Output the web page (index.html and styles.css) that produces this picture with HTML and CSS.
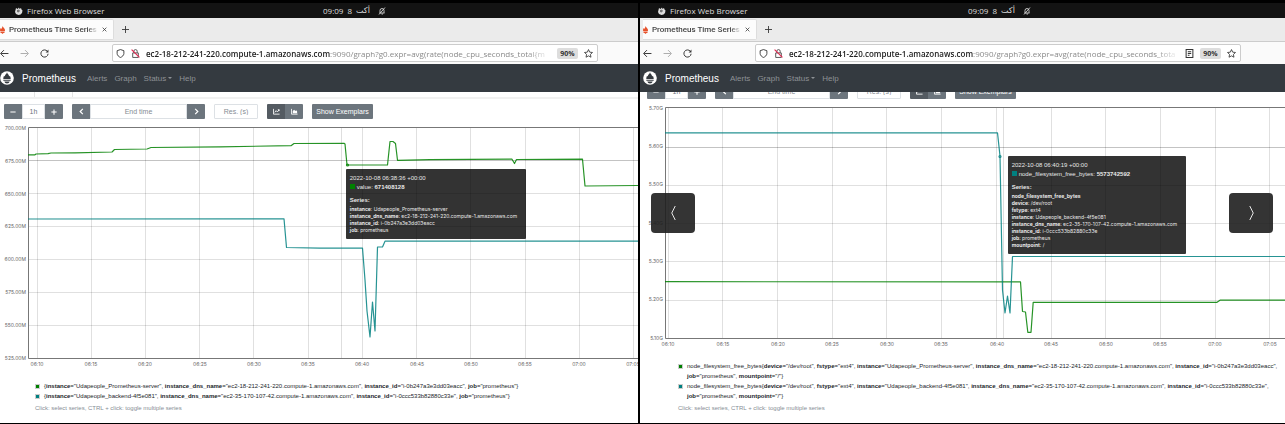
FILE: index.html
```html
<!DOCTYPE html>
<html lang="en">
<head>
<meta charset="utf-8">
<title>Prometheus Time Series</title>
<link rel="stylesheet" href="styles.css">
</head>
<body>
<svg class="sprite" aria-hidden="true">
  <symbol id="firefox" viewBox="0 0 16 16"><path fill="#ddd" d="M2 2l3 2 3-3 1 3 3-2 1 3 2 2-1 5-3 3-4 1-5-2-2-4z"/><path fill="#777" d="M4 6l4-1 2 3-3 3-3-1z"/></symbol>
  <symbol id="bell" viewBox="0 0 16 16"><path fill="none" stroke="currentColor" stroke-width="1.7" d="M4 11V7a4 4 0 0 1 8 0v4l1 1H3zM7 14h3M2 15L14 1"/></symbol>
  <symbol id="flame" viewBox="0 0 10 16"><path fill="#e6522c" d="M5 0c1 3 5 5 5 8 0 1 0 2-1 3H1C0 10 0 9 0 8c0-2 1-2 1-4l2 2c0-2 2-3 2-6zM1 12h8v2H7l-2 2-2-2H1z"/></symbol>
  <symbol id="x" viewBox="0 0 16 16"><path fill="none" stroke="currentColor" stroke-width="2.4" d="M2 2l12 12M14 2L2 14"/></symbol>
  <symbol id="plus" viewBox="0 0 16 16"><path fill="none" stroke="currentColor" stroke-width="2" d="M8 0v16M0 8h16"/></symbol>
  <symbol id="arrow" viewBox="0 0 16 16"><path fill="none" stroke="currentColor" stroke-width="1.700" d="M15 8H2M7 2L1 8l6 6"/></symbol>
  <symbol id="reload" viewBox="0 0 16 16"><path fill="none" stroke="currentColor" stroke-width="1.700" d="M13 4a6.4 6.4 0 1 0 1.4 4.5"/><path fill="currentColor" d="M15 1v5h-5z"/></symbol>
  <symbol id="shield" viewBox="0 0 16 16"><path fill="none" stroke="currentColor" stroke-width="1.6" stroke-linejoin="round" d="M8 1l6 2v5c0 3-3 6-6 7-3-1-6-4-6-7V3z"/></symbol>
  <symbol id="lock" viewBox="0 0 16 16"><path fill="none" stroke="#555" stroke-width="1.7" d="M3 7h10v8H3zM5 7V4a3 3 0 0 1 6 0v3"/><path stroke="#e22850" stroke-width="2" d="M1 1l14 14"/></symbol>
  <symbol id="reader" viewBox="0 0 16 16"><path fill="none" stroke="currentColor" stroke-width="1.8" d="M2 1h12v14H2zM5 5h6M5 8h6M5 11h3"/></symbol>
  <symbol id="star" viewBox="0 0 16 16"><path fill="none" stroke="currentColor" stroke-width="1.5" stroke-linejoin="round" d="M8 1l2.1 4.6 5 .6-3.700 3.400 1 5L8 12.200l-4.400 2.400 1-5L.9 6.200l5-.6z"/></symbol>
  <symbol id="logo" viewBox="0 0 16 16"><circle cx="8" cy="8" r="7.800" fill="#fff"/><path fill="#343a40" d="M8 1.500c.4 2 2.400 2.700 2.400 4.700l.9-.8c.5 1.500 1 2 .9 3.600H3.800c-.1-1.600.4-2.100.8-3.500l.9.800C5.500 4.300 7.700 3.500 8 1.500zM3.800 9.900h8.400v1.200H3.800zM5 12h6c-.3 1.500-1.500 2.200-3 2.200S5.300 13.500 5 12z"/></symbol>
  <symbol id="minus-b" viewBox="0 0 16 16"><path stroke="currentColor" stroke-width="2.800" d="M1 8h14"/></symbol>
  <symbol id="plus-b" viewBox="0 0 16 16"><path stroke="currentColor" stroke-width="2.800" d="M1 8h14M8 1v14"/></symbol>
  <symbol id="left" viewBox="0 0 16 16"><path fill="none" stroke="currentColor" stroke-width="2.800" d="M11 2L5 8l6 6"/></symbol>
  <symbol id="right" viewBox="0 0 16 16"><path fill="none" stroke="currentColor" stroke-width="2.800" d="M5 2l6 6-6 6"/></symbol>
  <symbol id="line" viewBox="0 0 16 16"><path fill="none" stroke="currentColor" stroke-width="2" d="M1 2v12h14M4 10l3-4 3 3 4-5M11 4h3v3"/></symbol>
  <symbol id="area" viewBox="0 0 16 16"><path fill="none" stroke="currentColor" stroke-width="2" d="M1 2v12h14"/><path fill="currentColor" d="M4 12V7l3-3 3 3 2-2 2 3v4z"/></symbol>
</svg>

<main class="desk">
  <section class="pane">
    <header class="sysbar">
      <div class="app"><svg class="i8"><use href="#firefox"/></svg>Firefox Web Browser</div>
      <div class="clock"><span>09:09</span><span>8</span><bdi class="ar">أكت</bdi><svg class="i8 bell"><use href="#bell"/></svg></div>
    </header>
    <div class="tabs">
      <div class="tab"><svg class="flame"><use href="#flame"/></svg><span class="title">Prometheus Time Series C</span><button class="plain" aria-label="Close tab"><svg class="i5"><use href="#x"/></svg></button></div>
      <button class="plain" aria-label="New tab"><svg class="i7"><use href="#plus"/></svg></button>
    </div>
    <div class="address">
      <button class="plain" aria-label="Back"><svg class="i9"><use href="#arrow"/></svg></button>
      <button class="plain fwd" aria-label="Forward"><svg class="i9"><use href="#arrow"/></svg></button>
      <button class="plain" aria-label="Reload"><svg class="i9"><use href="#reload"/></svg></button>
      <div class="url">
        <svg class="i9"><use href="#shield"/></svg><svg class="i9"><use href="#lock"/></svg>
        <div class="text" role="textbox" aria-label="Address" contenteditable="true" spellcheck="false"><b>ec2-18-212-241-220.compute-1.amazonaws.com</b>:9090/graph?g0.expr=avg(rate(node_cpu_seconds_total{m</div>
        <button class="zoom">90%</button>
        <button class="plain" aria-label="Bookmark"><svg class="i9"><use href="#star"/></svg></button>
      </div>
    </div>
    <nav class="nav">
      <svg class="logo"><use href="#logo"/></svg>
      <a class="brand" href="#">Prometheus</a><a href="#">Alerts</a><a href="#">Graph</a><a class="caret" href="#">Status</a><a href="#">Help</a>
    </nav>
    <div class="content">
      <div class="strip"><span></span><span></span></div>
      <form class="controls">
        <div class="group"><button type="button" aria-label="Shorter"><svg class="i6"><use href="#minus-b"/></svg></button><input class="range" aria-label="Range" value="1h"><button type="button" aria-label="Longer"><svg class="i6"><use href="#plus-b"/></svg></button></div>
        <div class="group"><button type="button" aria-label="Earlier"><svg class="i7"><use href="#left"/></svg></button><input class="end" aria-label="End time" placeholder="End time"><button type="button" aria-label="Later"><svg class="i7"><use href="#right"/></svg></button></div>
        <input class="res" aria-label="Resolution" placeholder="Res. (s)">
        <div class="group"><button type="button" class="on" aria-label="Line graph"><svg class="i7"><use href="#line"/></svg></button><button type="button" aria-label="Stacked graph"><svg class="i7"><use href="#area"/></svg></button></div>
        <button type="button" class="wide">Show Exemplars</button>
      </form>
      <div class="chart">
        <svg class="plot" viewBox="0 119 638 252">
          <path class="grid" d="M28 160.500H638M28 193.500H638M28 226.500H638M28 259.500H638M28 292.500H638M28 325.500H638M37.500 127V358M91.500 127V358M145.500 127V358M199.500 127V358M253.500 127V358M308.500 127V358M362.500 127V358M416.500 127V358M470.500 127V358M525.500 127V358M579.500 127V358M633.500 127V358"/>
          <path class="cross" d="M341.500 127V358M28 160.500H638"/>
          <path class="frame" d="M640 127.500H28.500V358.500H640"/>
          <path class="green" d="M28 154.800H35L36 154L48 153.700L51 153L75 152.800L112 152L114.500 149.500L147 149L151 147.500L220 146.800L291 145.700L294 143.500L344 143.300L345 144L347 165H387.500L390 141.500H393L395.500 143.500L397.500 160.300L430 159.600L512 159.200L514.500 163.500L516.500 159.500L582.500 159.200L585 186L638 185.500"/>
          <path class="teal" d="M28 219L284 218.800L286.500 247.500L320 248.200H362.500L365 280L367 311L370 337L372.500 302L375 331L377.500 247H382.500L385 241.200H638"/>
          <circle class="green" cx="347.500" cy="165" r="1"/>
          <g class="ylab"><text x="26" y="130">700.00M</text><text x="26" y="163">675.00M</text><text x="26" y="196">650.00M</text><text x="26" y="228">625.00M</text><text x="26" y="261">600.00M</text><text x="26" y="294">575.00M</text><text x="26" y="327">550.00M</text><text x="26" y="360">525.00M</text></g>
          <g class="xlab"><text x="37" y="366">06:10</text><text x="91" y="366">06:15</text><text x="145" y="366">06:20</text><text x="200" y="366">06:25</text><text x="254" y="366">06:30</text><text x="308" y="366">06:35</text><text x="362" y="366">06:40</text><text x="417" y="366">06:45</text><text x="471" y="366">06:50</text><text x="525" y="366">06:55</text><text x="579" y="366">07:00</text><text x="633" y="366">07:05</text></g>
        </svg>
        <div class="tip tip-a">
          <div>2022-10-08 06:38:36 +00:00</div>
          <div><i class="dot g"></i>value: <b>671408128</b></div>
          <h4>Series:</h4>
          <ul><li><b>instance</b>: Udapeople_Prometheus-server</li><li><b>instance_dns_name</b>: ec2-18-212-241-220.compute-1.amazonaws.com</li><li><b>instance_id</b>: i-0b247a3e3dd03eacc</li><li><b>job</b>: prometheus</li></ul>
        </div>
      </div>
      <div class="legend">
        <div class="row"><i class="key g"></i><span>{<b>instance</b>="Udapeople_Prometheus-server", <b>instance_dns_name</b>="ec2-18-212-241-220.compute-1.amazonaws.com", <b>instance_id</b>="i-0b247a3e3dd03eacc", <b>job</b>="prometheus"}</span></div>
        <div class="row"><i class="key t"></i><span>{<b>instance</b>="Udapeople_backend-4f5e081", <b>instance_dns_name</b>="ec2-35-170-107-42.compute-1.amazonaws.com", <b>instance_id</b>="i-0ccc533b82880c33e", <b>job</b>="prometheus"}</span></div>
        <p>Click: select series, CTRL + click: toggle multiple series</p>
      </div>
    </div>
  </section>

  <section class="pane second">
    <header class="sysbar">
      <div class="app"><svg class="i8"><use href="#firefox"/></svg>Firefox Web Browser</div>
      <div class="clock"><span>09:09</span><span>8</span><bdi class="ar">أكت</bdi><svg class="i8 bell"><use href="#bell"/></svg></div>
    </header>
    <div class="tabs">
      <div class="tab"><svg class="flame"><use href="#flame"/></svg><span class="title">Prometheus Time Series C</span><button class="plain" aria-label="Close tab"><svg class="i5"><use href="#x"/></svg></button></div>
      <button class="plain" aria-label="New tab"><svg class="i7"><use href="#plus"/></svg></button>
    </div>
    <div class="address">
      <button class="plain" aria-label="Back"><svg class="i9"><use href="#arrow"/></svg></button>
      <button class="plain fwd" aria-label="Forward"><svg class="i9"><use href="#arrow"/></svg></button>
      <button class="plain" aria-label="Reload"><svg class="i9"><use href="#reload"/></svg></button>
      <div class="url">
        <svg class="i9"><use href="#shield"/></svg><svg class="i9"><use href="#lock"/></svg>
        <div class="text" role="textbox" aria-label="Address" contenteditable="true" spellcheck="false"><b>ec2-18-212-241-220.compute-1.amazonaws.com</b>:9090/graph?g0.expr=avg(rate(node_cpu_seconds_tota</div>
        <button class="plain" aria-label="Reader view"><svg class="i9"><use href="#reader"/></svg></button>
        <button class="zoom">90%</button>
        <button class="plain" aria-label="Bookmark"><svg class="i9"><use href="#star"/></svg></button>
      </div>
    </div>
    <nav class="nav">
      <svg class="logo"><use href="#logo"/></svg>
      <a class="brand" href="#">Prometheus</a><a href="#">Alerts</a><a href="#">Graph</a><a class="caret" href="#">Status</a><a href="#">Help</a>
    </nav>
    <div class="content">
      <form class="controls">
        <div class="group"><button type="button" aria-label="Shorter"><svg class="i6"><use href="#minus-b"/></svg></button><input class="range" aria-label="Range" value="1h"><button type="button" aria-label="Longer"><svg class="i6"><use href="#plus-b"/></svg></button></div>
        <div class="group"><button type="button" aria-label="Earlier"><svg class="i7"><use href="#left"/></svg></button><input class="end" aria-label="End time" placeholder="End time"><button type="button" aria-label="Later"><svg class="i7"><use href="#right"/></svg></button></div>
        <input class="res" aria-label="Resolution" placeholder="Res. (s)">
        <div class="group"><button type="button" class="on" aria-label="Line graph"><svg class="i7"><use href="#line"/></svg></button><button type="button" aria-label="Stacked graph"><svg class="i7"><use href="#area"/></svg></button></div>
        <button type="button" class="wide">Show Exemplars</button>
      </form>
      <div class="chart">
        <svg class="plot" viewBox="640 99 645 252">
          <path class="grid" d="M665 147.500H1285M665 185.500H1285M665 223.500H1285M665 261.500H1285M665 300.500H1285M668.500 107V338M722.500 107V338M777.500 107V338M832.500 107V338M886.500 107V338M941.500 107V338M996.500 107V338M1051.500 107V338M1105.500 107V338M1160.500 107V338M1215.500 107V338M1269.500 107V338"/>
          <path class="cross" d="M1003.500 107V338M665 147.500H1285"/>
          <path class="frame" d="M1287 107.500H665.500V338.500H1287"/>
          <path class="green" d="M665 281.700L1020.500 281.800L1022.500 311.500L1025.500 312L1027.800 332.300H1031L1033.200 302.300H1217L1220 300.200H1285"/>
          <path class="teal" d="M665 132.800H997.500L1000 156L1002.500 290L1005 313L1007.500 296L1010 313L1012.500 256.500H1285"/>
          <circle class="teal" cx="1000" cy="156.500" r="1"/>
          <g class="ylab"><text x="663" y="110">5.70G</text><text x="663" y="148">5.60G</text><text x="663" y="186">5.50G</text><text x="663" y="225">5.40G</text><text x="663" y="263">5.30G</text><text x="663" y="301">5.20G</text><text x="663" y="340">5.10G</text></g>
          <g class="xlab"><text x="668" y="346">06:10</text><text x="723" y="346">06:15</text><text x="778" y="346">06:20</text><text x="832" y="346">06:25</text><text x="887" y="346">06:30</text><text x="941" y="346">06:35</text><text x="997" y="346">06:40</text><text x="1051" y="346">06:45</text><text x="1106" y="346">06:50</text><text x="1160" y="346">06:55</text><text x="1215" y="346">07:00</text><text x="1270" y="346">07:05</text></g>
        </svg>
        <div class="tip tip-b">
          <div>2022-10-08 06:40:19 +00:00</div>
          <div><i class="dot t"></i>node_filesystem_free_bytes: <b>5573742592</b></div>
          <h4>Series:</h4>
          <ul><li><b>node_filesystem_free_bytes</b></li><li><b>device</b>: /dev/root</li><li><b>fstype</b>: ext4</li><li><b>instance</b>: Udapeople_backend-4f5e081</li><li><b>instance_dns_name</b>: ec2-35-170-107-42.compute-1.amazonaws.com</li><li><b>instance_id</b>: i-0ccc533b82880c33e</li><li><b>job</b>: prometheus</li><li><b>mountpoint</b>: /</li></ul>
        </div>
      </div>
      <div class="legend">
        <div class="row"><i class="key g"></i><span>node_filesystem_free_bytes{<b>device</b>="/dev/root", <b>fstype</b>="ext4", <b>instance</b>="Udapeople_Prometheus-server", <b>instance_dns_name</b>="ec2-18-212-241-220.compute-1.amazonaws.com", <span class="keep"><b>instance_id</b>="i-0b247a3e3dd03eacc"</span>, <b>job</b>="prometheus", <b>mountpoint</b>="/"}</span></div>
        <div class="row"><i class="key t"></i><span>node_filesystem_free_bytes{<b>device</b>="/dev/root", <b>fstype</b>="ext4", <b>instance</b>="Udapeople_backend-4f5e081", <b>instance_dns_name</b>="ec2-35-170-107-42.compute-1.amazonaws.com", <span class="keep"><b>instance_id</b>="i-0ccc533b82880c33e"</span>, <b>job</b>="prometheus", <b>mountpoint</b>="/"}</span></div>
        <p>Click: select series, CTRL + click: toggle multiple series</p>
      </div>
    </div>
    <button class="slide prev" aria-label="Previous"><svg viewBox="0 0 8 18"><path d="M6 1L2 9l4 8"/></svg></button>
    <button class="slide next" aria-label="Next"><svg viewBox="0 0 8 18"><path d="M2 1l4 8-4 8"/></svg></button>
  </section>
</main>
</body>
</html>
```
FILE: styles.css
```css
* { box-sizing: border-box; }
body { margin: 0; background: #000; font-family: "Liberation Sans", Arial, sans-serif; }
.sprite { position: absolute; width: 0; height: 0; }
svg { display: block; flex: none; }
button, input { font: inherit; margin: 0; padding: 0; border: 0; min-width: 0; }
.i5 { width: 5px; height: 5px; }
.i6 { width: 6px; height: 6px; }
.i7 { width: 7px; height: 7px; }
.i8 { width: 8px; height: 8px; }
.i9 { width: 9px; height: 9px; }
.plain { background: none; color: #333; display: flex; align-items: center; justify-content: center; }

.desk { display: grid; grid-template-columns: minmax(0, 638fr) minmax(0, 645fr); gap: 2px; min-height: 100vh; border-top: 3px solid #000; border-bottom: 1px solid #000; }
.pane { position: relative; display: flex; flex-direction: column; background: #fff; overflow: hidden; --inset: 0px; }
.second { --inset: 3px; }
.sysbar, .tabs, .address, .nav, .controls { padding-left: var(--inset); }

.sysbar { display: grid; grid-template-columns: 1fr 1fr; align-items: center; height: 15px; background: #131313; color: #ddd; font: 500 8px "Open Sans", "Noto Sans", sans-serif; }
.app, .clock { display: flex; align-items: center; white-space: nowrap; }
.app { padding-left: 15px; gap: 4px; }
.clock { padding-left: 4px; gap: 4px; }
.ar { font-family: "DejaVu Sans", sans-serif; }
.bell { margin-left: 4px; }

.tabs { display: flex; align-items: center; gap: 8px; height: 24px; background: #ebebeb; border-bottom: 1px solid #ccc; }
.tab { display: flex; align-items: center; width: 114px; height: 21px; padding-right: 6px; gap: 4px; background: #fcfcfc; border: 1px solid #ddd; border-left: 0; border-radius: 0 2px 2px 0; color: #444; font: 500 8px Roboto, "Noto Sans", sans-serif; }
.flame { width: 5px; height: 8px; }
.title { flex: 1; overflow: hidden; white-space: nowrap; mask-image: linear-gradient(to right, #000 88%, transparent); }

.address { display: flex; align-items: center; height: 22px; background: #fafafa; color: #333; }
.address > .plain { width: 9px; margin-right: 11px; }
.address > .fwd { transform: scaleX(-1); color: #aaa; }
.url { flex: 1; min-width: 0; display: flex; align-items: center; gap: 6px; height: 18px; margin: 0 40px 0 52px; padding: 0 4px 0 3px; background: #fff; border: 1px solid #ccc; border-radius: 2px; }
.text { flex: 1; overflow: hidden; white-space: nowrap; color: #8a8a8a; font: 8px "Open Sans", "Noto Sans", sans-serif; mask-image: linear-gradient(to right, #000 94%, transparent); }
.text b { color: #222; font-weight: 600; }
.second .url { margin-right: 44px; }
.zoom { width: 21px; height: 11px; border-radius: 2px; background: #ddd; color: #333; font: bold 7px "Open Sans", "Noto Sans", sans-serif; }

.nav { display: flex; align-items: center; height: 28px; flex: none; background: #343a40; font-size: 8px; }
.nav a { color: #8d9195; text-decoration: none; margin-right: 7px; }
.nav .brand { color: #fff; font-size: 10px; margin: 0 11px 0 8px; }
.logo { width: 14px; height: 14px; }
.caret { display: flex; align-items: center; gap: 2px; }
.caret::after { content: ""; border: 2px solid transparent; border-top-color: currentColor; border-bottom: 0; }

.content { flex: 1; overflow: hidden; }
.strip { display: flex; height: 7px; margin-bottom: 5px; border-bottom: 2px solid #f1f1f1; }
.strip span { border-right: 1px solid #e4e4e4; width: 38px; }
.strip span:first-child { width: 35px; }
.controls { display: flex; gap: 9px; height: 15px; margin-left: 4px; font-size: 7px; }
.second .controls { margin-top: -8px; }
.group { display: flex; border-radius: 1px; overflow: hidden; }
.controls button { width: 18px; display: flex; align-items: center; justify-content: center; background: #6c757d; color: #fff; white-space: nowrap; }
.controls .on { background: #545b62; }
.controls .wide { width: 61px; border-radius: 1px; }
.controls input { border: 1px solid #dde1e5; color: #6c757d; text-align: center; background: #fff; }
.controls input::placeholder { color: #858c93; opacity: 1; }
.range { width: 23px; }
.end { width: 97px; }
.res { width: 44px; border-radius: 1px; }

.chart { position: relative; }
.plot { width: 100%; height: auto; }
.plot path, .plot circle { fill: none; }
.grid { stroke: #000; stroke-opacity: .12; }
.cross { stroke: #000; stroke-opacity: .13; }
.frame { stroke: #777; }
.plot .green, .plot .teal { stroke-opacity: .85; stroke-width: 1.2; stroke-linejoin: round; }
.green { stroke: #008000; }
.teal { stroke: #008080; }
.plot text { fill: #666; font: 5px Inter, "Liberation Sans", sans-serif; }
.ylab { text-anchor: end; }
.xlab { text-anchor: middle; }

.tip { position: absolute; padding: 5px 4px; border-radius: 1px; background: rgba(0, 0, 0, .8); color: #e8e8e8; font-size: 6px; line-height: 9px; white-space: nowrap; }
.tip-a { left: 54.2%; top: 50px; width: 180px; }
.tip-b { left: 57%; top: 57px; width: 178px; }
.tip h4 { margin: 4px 0 1px; font-size: 6px; line-height: 9px; }
.tip ul { list-style: none; margin: 0; padding: 0; font: 5px/7px Inter, "Liberation Sans", sans-serif; }
.dot { display: inline-block; width: 5px; height: 5px; margin-right: 2px; }
.g { background: #008000; }
.t { background: #008080; }

.legend { padding: 10px 0 0 35px; color: #212529; font-size: 6px; line-height: 10px; }
.second .legend { padding-left: 38px; }
.row { display: flex; gap: 4px; }
.keep { white-space: nowrap; }
.key { flex: none; width: 5px; height: 5px; margin-top: 3px; border: 1px solid #ccc; }
.legend p { margin: 2px 0 0; color: #868e96; }

.slide { position: absolute; top: 190px; width: 44px; height: 40px; border-radius: 4px; background: rgba(30, 30, 30, .9); display: flex; align-items: center; justify-content: center; }
.slide svg { width: 7px; height: 16px; fill: none; stroke: #fff; }
.prev { left: 11px; }
.next { right: 12px; }
```
